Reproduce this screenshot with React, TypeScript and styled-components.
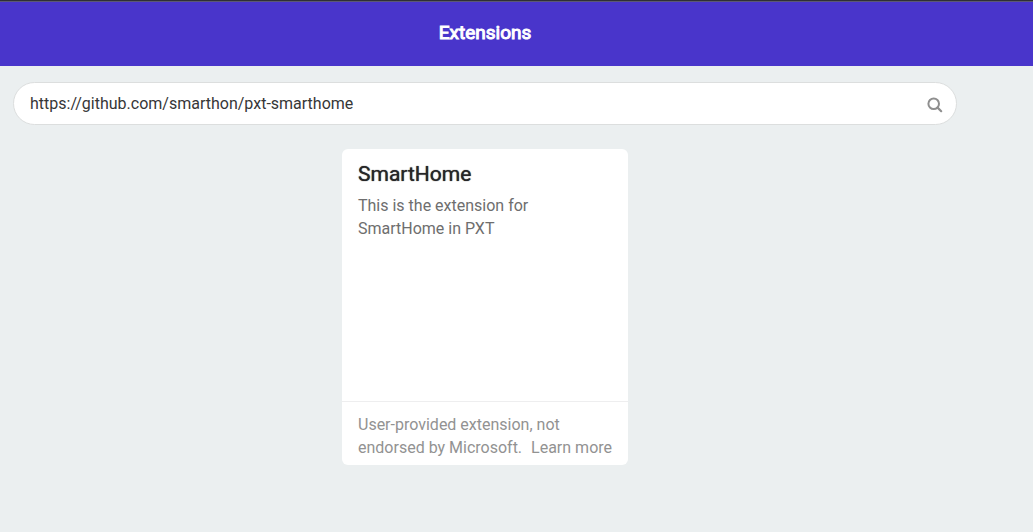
import React, { useState } from "react";
import styled, { createGlobalStyle } from "styled-components";

const GlobalStyle = createGlobalStyle`
  *, *::before, *::after { box-sizing: border-box; }
  body {
    margin: 0;
    background: #ebeff0;
    color: #2a2a2b;
    font-family: Roboto, "Liberation Sans", sans-serif;
    font-size: 16px;
    line-height: 23px;
  }
`;

const Page = styled.div`
  min-height: 100vh;
`;

const Header = styled.header`
  height: 66px;
  padding: 0 63px 2px 0;
  border-top: 1px solid #2f2f35;
  background: #4935cb;
  box-shadow: inset 0 1px 0 #5b5874;
  display: flex;
  align-items: center;
  justify-content: center;
`;

const Title = styled.h1`
  margin: 0;
  color: #fff;
  font-size: 19px;
  line-height: 24px;
  font-weight: 400;
  -webkit-text-stroke: 1px #fff;
`;

const Main = styled.main`
  padding: 16px 76px 32px 13px;
  display: flex;
  flex-direction: column;
  align-items: center;
  gap: 24px;
`;

const SearchForm = styled.form`
  width: 100%;
  height: 43px;
  padding: 0 13px 0 16px;
  border: 1px solid #dcdede;
  border-radius: 22px;
  background: #fff;
  display: flex;
  align-items: center;
`;

const SearchInput = styled.input`
  flex: 1;
  min-width: 0;
  height: 100%;
  padding: 0;
  border: 0;
  outline: 0;
  background: transparent;
  color: #363637;
  font: inherit;
`;

const SearchButton = styled.button`
  padding: 2px 0 0;
  border: 0;
  background: transparent;
  color: #8f8f8f;
  display: flex;
  cursor: pointer;
`;

const Card = styled.article`
  width: 286px;
  min-height: 316px;
  border-radius: 6px;
  background: #fff;
  display: flex;
  flex-direction: column;
`;

const CardBody = styled.div`
  flex: 1;
  padding: 12px 16px;
`;

const CardTitle = styled.h2`
  margin: 0 0 7px;
  color: #262627;
  font-size: 21px;
  line-height: 26px;
  font-weight: 400;
  text-shadow: 0 0 1px #262627;
`;

const Description = styled.p`
  max-width: 200px;
  margin: 0;
  color: #6e6e6e;
`;

const CardFooter = styled.footer`
  padding: 11px 16px 6px;
  border-top: 1px solid #eeeeef;
  color: #929292;
`;

const LearnMore = styled.a`
  margin-left: 5px;
  color: inherit;
  text-decoration: none;
  white-space: nowrap;
`;

const SearchIcon = () => (
  <svg width="16" height="16" viewBox="0 0 16 16" fill="none" stroke="currentColor" aria-hidden="true">
    <circle cx="6.7" cy="6.7" r="5.3" strokeWidth="2" />
    <path d="M10.6 10.6 L14.2 14.2" strokeWidth="2.2" strokeLinecap="round" />
  </svg>
);

export default function App() {
  const [query, setQuery] = useState("https://github.com/smarthon/pxt-smarthome");
  return (
    <Page>
      <GlobalStyle />
      <Header>
        <Title>Extensions</Title>
      </Header>
      <Main>
        <SearchForm role="search" onSubmit={(e) => e.preventDefault()}>
          <SearchInput
            type="text"
            aria-label="Search or enter project URL"
            value={query}
            onChange={(e) => setQuery(e.target.value)}
          />
          <SearchButton type="submit" aria-label="Search">
            <SearchIcon />
          </SearchButton>
        </SearchForm>
        <Card>
          <CardBody>
            <CardTitle>SmartHome</CardTitle>
            <Description>This is the extension for SmartHome in PXT</Description>
          </CardBody>
          <CardFooter>
            User-provided extension, not endorsed by Microsoft. <LearnMore href="#learn-more">Learn more</LearnMore>
          </CardFooter>
        </Card>
      </Main>
    </Page>
  );
}
